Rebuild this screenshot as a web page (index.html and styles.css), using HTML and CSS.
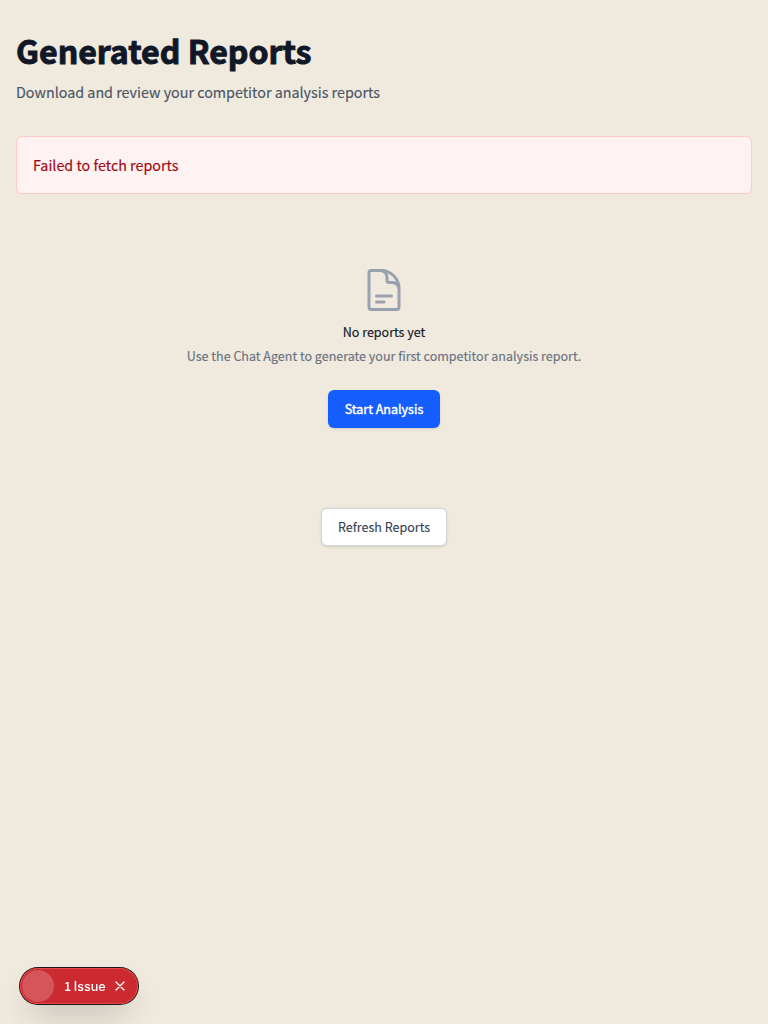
FILE: index.html
```html
<!DOCTYPE html>
<html lang="en">
<head>
<meta charset="utf-8">
<title>Generated Reports</title>
<link rel="stylesheet" href="styles.css">
</head>
<body>
<main class="page">
  <header class="header">
    <h1 class="title">Generated Reports</h1>
    <p class="subtitle">Download and review your competitor analysis reports</p>
  </header>
  <div class="alert" role="alert">Failed to fetch reports</div>
  <section class="empty">
    <svg class="empty-icon" viewBox="0 0 24 24" fill="none" stroke="currentColor" stroke-width="1.5" stroke-linecap="round" stroke-linejoin="round" aria-hidden="true">
      <path d="M19.5 14.25v-2.625a3.375 3.375 0 00-3.375-3.375h-1.5A1.125 1.125 0 0113.5 7.125v-1.5a3.375 3.375 0 00-3.375-3.375H8.25m0 12.75h7.5m-7.5 3H12M10.5 2.25H5.625c-.621 0-1.125.504-1.125 1.125v17.25c0 .621.504 1.125 1.125 1.125h12.75c.621 0 1.125-.504 1.125-1.125V11.25a9 9 0 00-9-9z"/>
    </svg>
    <h3 class="empty-title">No reports yet</h3>
    <p class="empty-text">Use the Chat Agent to generate your first competitor analysis report.</p>
    <button class="button button-primary">Start Analysis</button>
  </section>
  <div class="actions">
    <button class="button button-secondary">Refresh Reports</button>
  </div>
</main>
<aside class="issues">
  <span class="issues-mark"></span>
  <span class="issues-label"><span class="issues-count">1</span> Issue</span>
  <svg class="issues-close" viewBox="0 0 12 12" fill="none" stroke="currentColor" stroke-width="1.25" stroke-linecap="round" aria-hidden="true"><path d="M2 2l8 8M10 2l-8 8"/></svg>
</aside>
</body>
</html>
```
FILE: styles.css
```css
* { box-sizing: border-box; margin: 0; padding: 0; }
body {
  min-height: 100vh;
  background: #f0eade;
  color: #101828;
  font-family: "Noto Sans CJK SC", "Noto Sans", sans-serif;
  font-size: 14.32px;
  line-height: 24px;
}
.page { padding: 32px 16px; }
.header { margin-bottom: 32px; }
.title { font-size: 32.1px; line-height: 36px; font-weight: 700; -webkit-text-stroke: 1px; }
.subtitle { margin-top: 12px; color: #4a5565; -webkit-text-stroke: .15px; }
.alert {
  margin-bottom: 24px;
  padding: 16px;
  border: 1px solid #ffc9c9;
  border-radius: 6px;
  background: #fef2f2;
  color: #9f0712;
  -webkit-text-stroke: .15px;
}
.empty {
  display: flex;
  flex-direction: column;
  align-items: center;
  padding: 48px 0;
  font-size: 12.53px;
  line-height: 20px;
}
.empty-icon { width: 48px; height: 48px; color: #99a1af; }
.empty-title { margin-top: 8px; font-size: 12.53px; font-weight: 400; -webkit-text-stroke: .15px; }
.empty-text { margin: 4px 0 24px; color: #6a7282; -webkit-text-stroke: .15px; }
.button {
  height: 38px;
  padding: 8px 16px;
  border: 1px solid transparent;
  border-radius: 6px;
  font: 400 12.54px/20px "Noto Sans CJK SC", "Noto Sans", sans-serif;
  -webkit-text-stroke: .12px;
  box-shadow: 0 1px 3px rgba(0, 0, 0, .1), 0 1px 2px -1px rgba(0, 0, 0, .1);
}
.button-primary { background: #155dfc; color: #fff; -webkit-text-stroke: .4px; }
.button-secondary { border-color: #d1d5dc; background: #fff; color: #364153; }
.actions { display: flex; justify-content: center; margin-top: 32px; }
.issues {
  position: fixed;
  left: 20px;
  bottom: 20px;
  display: flex;
  align-items: center;
  width: 118px;
  height: 36px;
  padding: 2px;
  border-radius: 18px;
  background: #ca2a30;
  color: #fff;
  box-shadow: 0 0 0 1px #171717, inset 0 0 0 1px #e5484d, 0 16px 32px -8px rgba(0, 0, 0, .24);
}
.issues-mark { width: 32px; height: 32px; border-radius: 50%; background: #d5555a; }
.issues-label { width: 42px; margin-left: 10px; font: 500 12.6px/16px Inter, sans-serif; white-space: nowrap; word-spacing: -.8px; }
.issues-count { font: 500 12.5px/16px "Noto Sans CJK SC", sans-serif; }
.issues-close { width: 12px; height: 12px; margin-left: 8px; }
```
